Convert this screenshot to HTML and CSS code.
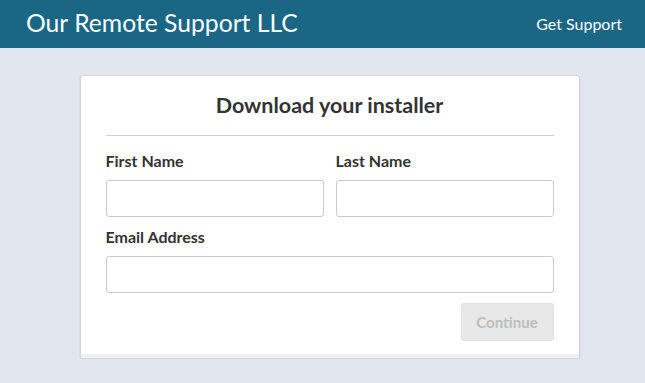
FILE: index.html
```html
<!DOCTYPE html>
<html>
<head>
<meta charset="utf-8">
<link rel="stylesheet" href="styles.css">
</head>
<body>
<header class="topbar">
  <div class="brand">Our Remote Support LLC</div>
  <a class="nav-link" href="#">Get Support</a>
</header>
<main class="page">
  <section class="card">
    <div class="card-body">
      <h1 class="card-title">Download your installer</h1>
      <hr class="divider">
      <div class="row">
        <div class="field">
          <label class="label">First Name</label>
          <input class="input" type="text">
        </div>
        <div class="field">
          <label class="label">Last Name</label>
          <input class="input" type="text">
        </div>
      </div>
      <div class="field">
        <label class="label">Email Address</label>
        <input class="input" type="text">
      </div>
      <div class="actions">
        <button class="btn" disabled>Continue</button>
      </div>
    </div>
    <div class="card-foot"></div>
  </section>
</main>
</body>
</html>
```

FILE: styles.css
```css
* { box-sizing: border-box; }
html, body { margin: 0; padding: 0; }
body {
  background: #e2e6ee;
  font-family: Lato, "Open Sans", sans-serif;
  color: #333;
}
.topbar {
  height: 48px;
  background: #196685;
  display: flex;
  align-items: center;
  justify-content: space-between;
  padding: 0 23px 0 26px;
}
.brand {
  color: #fff;
  font-size: 24.7px;
  line-height: 1;
  margin-top: -2px;
}
.nav-link {
  color: #fff;
  text-decoration: none;
  font-size: 16px;
  margin-top: -1px;
}
.page {
  display: flex;
  justify-content: center;
  padding: 27px 0 0 14px;
}
.card {
  width: 500px;
  background: #fff;
  border: 1px solid #d3d6dc;
  border-radius: 3px;
  box-shadow: 0 1px 2px rgba(0,0,0,0.12);
  overflow: hidden;
}
.card-body {
  padding: 14px 25px 13px 25px;
}
.card-title {
  margin: 0;
  text-align: center;
  font-size: 21.5px;
  font-weight: 700;
  line-height: 30px;
  color: #333;
}
.divider {
  border: 0;
  border-top: 1px solid #cfcfcf;
  margin: 15px 0 15px;
}
.row {
  display: flex;
  gap: 12px;
}
.row .field { flex: 1; }
.row .input { margin-bottom: 10px; }
.field {
  display: flex;
  flex-direction: column;
}
.label {
  font-size: 16px;
  font-weight: 700;
  line-height: 20px;
  color: #333;
  margin-bottom: 9px;
}
.input {
  height: 37px;
  border: 1px solid #cbcbcb;
  border-radius: 3px;
  background: #fff;
  margin-bottom: 9px;
  font-family: inherit;
  font-size: 14px;
}
.actions {
  display: flex;
  justify-content: flex-end;
  margin-top: 1px;
}
.btn {
  width: 93px;
  height: 38px;
  border: 1px solid #e0e0e0;
  border-radius: 3px;
  background: #e8e8e8;
  color: #bdbdbd;
  font-family: inherit;
  font-weight: 700;
  font-size: 15px;
}
.card-foot {
  height: 4px;
  background: #eef0f4;
}
```
